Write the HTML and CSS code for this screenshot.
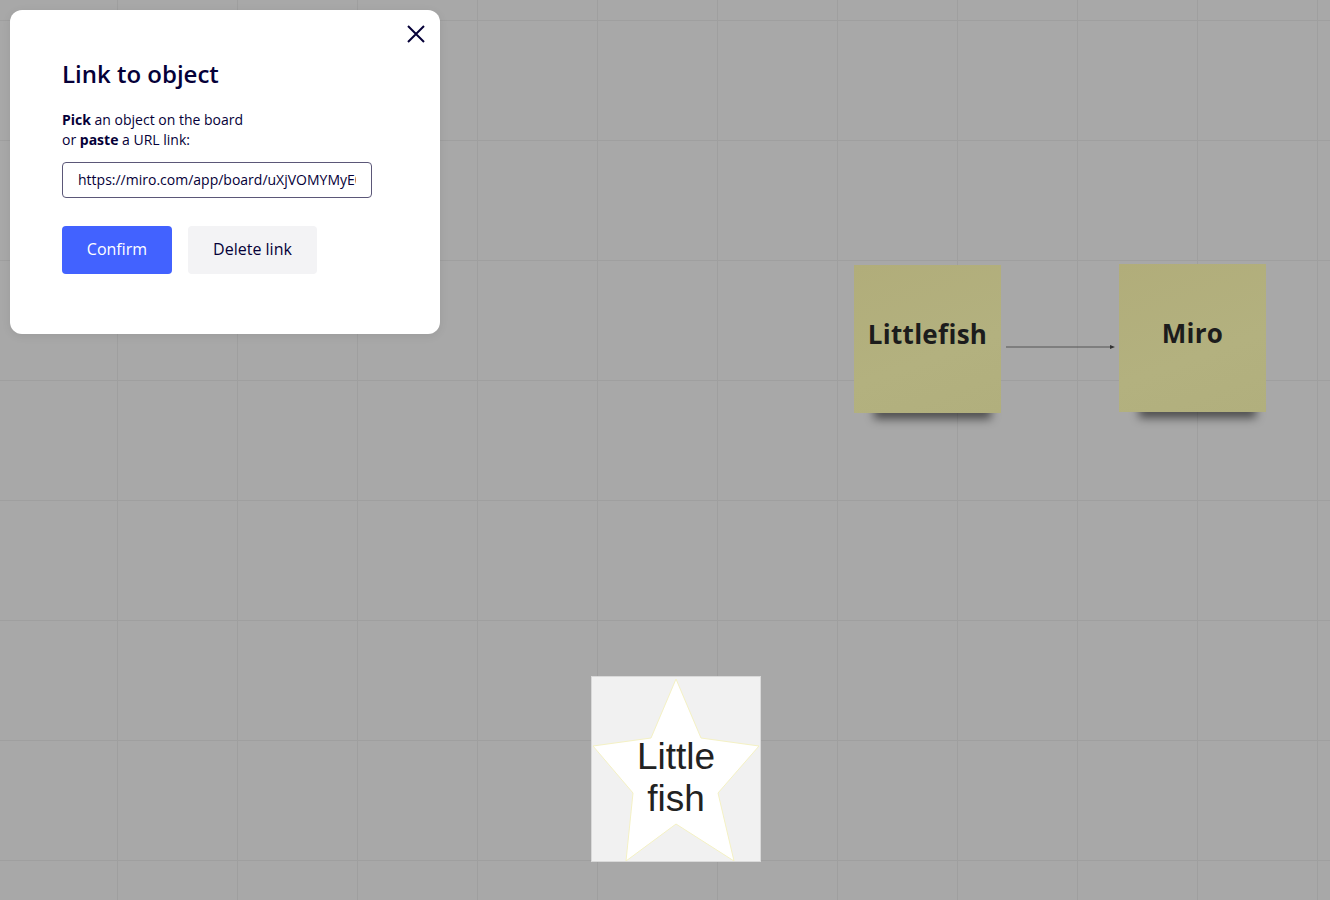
FILE: index.html
```html
<!DOCTYPE html>
<html lang="en">
<head>
<meta charset="utf-8">
<title>Link to object</title>
<link rel="stylesheet" href="styles.css">
</head>
<body>
<div class="board">
  <div class="sticky sticky-a"><span>Littlefish</span></div>
  <svg class="connector" width="112" height="6" viewBox="0 0 112 6">
    <line x1="0" y1="3" x2="106" y2="3" stroke="#555" stroke-width="1"/>
    <path d="M104 1 L109 3 L104 5 Z" fill="#333"/>
  </svg>
  <div class="sticky sticky-b"><span>Miro</span></div>

  <div class="shape">
    <svg class="star" width="168" height="184" viewBox="0 0 168 184">
      <polygon points="84,2 109,61 167,69 126,116 142,184 84,147 34,184 41,116 1,69 59,61" fill="#ffffff" stroke="#f4f1c4" stroke-width="1"/>
    </svg>
    <div class="shape-text">Little<br>fish</div>
  </div>

  <div class="modal">
    <button class="close" aria-label="Close">
      <svg width="18" height="18" viewBox="0 0 18 18"><path d="M1 1 L17 17 M17 1 L1 17" stroke="#050038" stroke-width="2" fill="none"/></svg>
    </button>
    <h1 class="title">Link to object</h1>
    <p class="hint"><b>Pick</b> an object on the board<br>or <b>paste</b> a URL link:</p>
    <div class="field"><div class="field-value">https://miro.com/app/board/uXjVOMYMyE0=</div></div>
    <div class="actions">
      <button class="btn btn-primary">Confirm</button>
      <button class="btn btn-secondary">Delete link</button>
    </div>
  </div>
</div>
</body>
</html>
```

FILE: styles.css
```css
html, body {
  margin: 0;
  padding: 0;
  width: 1330px;
  height: 900px;
  overflow: hidden;
}

.board {
  position: relative;
  isolation: isolate;
  width: 1330px;
  height: 900px;
  background-color: #a8a8a8;
  background-image:
    linear-gradient(to right, #9f9f9f 0, #9f9f9f 1px, transparent 1px),
    linear-gradient(to bottom, #9f9f9f 0, #9f9f9f 1px, transparent 1px);
  background-size: 120px 120px, 120px 120px;
  background-position: 117px 0, 0 20px;
  font-family: "Open Sans", "Noto Sans", sans-serif;
}

.sticky {
  position: absolute;
  width: 147px;
  height: 148px;
  background: linear-gradient(160deg, #b1ad7a 0%, #b3b17f 60%, #b1af7d 100%);
  display: flex;
  align-items: center;
  justify-content: center;
  font-family: "Open Sans", "Noto Sans", sans-serif;
  font-weight: 700;
  font-size: 26px;
  color: #1c1c1c;
  letter-spacing: 0.3px;
}

.sticky span {
  position: relative;
  top: -5px;
}

.sticky::after {
  content: "";
  position: absolute;
  left: 20px;
  right: 10px;
  bottom: -6px;
  height: 14px;
  background: rgba(0, 0, 0, 0.55);
  filter: blur(5px);
  z-index: -1;
}

.sticky-a {
  left: 854px;
  top: 265px;
}

.sticky-b {
  left: 1119px;
  top: 264px;
}

.connector {
  position: absolute;
  left: 1006px;
  top: 344px;
}

.shape {
  position: absolute;
  left: 591px;
  top: 676px;
  width: 168px;
  height: 184px;
  background: #f1f1f1;
  border: 1px solid #d9d9d9;
}

.star {
  position: absolute;
  left: 0;
  top: 0;
}

.shape-text {
  position: absolute;
  left: 0;
  right: 0;
  top: 59px;
  text-align: center;
  font-family: "Liberation Sans", Arial, sans-serif;
  font-size: 37px;
  line-height: 42px;
  color: #222222;
}

.modal {
  position: absolute;
  left: 10px;
  top: 10px;
  width: 430px;
  height: 324px;
  box-sizing: border-box;
  background: #ffffff;
  border-radius: 12px;
  padding: 46px 52px 0 52px;
  box-shadow: 0 2px 10px rgba(0, 0, 0, 0.08);
  color: #050038;
  z-index: 5;
}

.close {
  position: absolute;
  top: 12px;
  right: 12px;
  width: 24px;
  height: 24px;
  padding: 0;
  border: 0;
  background: transparent;
  display: flex;
  align-items: center;
  justify-content: center;
}

.title {
  margin: 0;
  font-size: 24px;
  font-weight: 600;
  line-height: 36px;
  color: #050038;
}

.hint {
  margin: 18px 0 0 0;
  font-size: 14px;
  line-height: 20px;
  color: #050038;
}

.hint b {
  font-weight: 700;
}

.field {
  margin-top: 12px;
  width: 310px;
  height: 36px;
  box-sizing: border-box;
  border: 1px solid #5b5778;
  border-radius: 4px;
  padding: 0 15px;
  font-size: 14px;
  line-height: 34px;
  color: #050038;
}

.field-value {
  white-space: nowrap;
  overflow: hidden;
}

.actions {
  display: flex;
  gap: 16px;
  margin-top: 28px;
}

.btn {
  height: 48px;
  border: 0;
  border-radius: 4px;
  font-family: "Open Sans", "Noto Sans", sans-serif;
  font-size: 16px;
  line-height: 22px;
  padding: 0 0 2px 0;
}

.btn-primary {
  width: 110px;
  background: #4262ff;
  color: #ffffff;
}

.btn-secondary {
  width: 129px;
  background: #f3f3f5;
  color: #050038;
}
```
